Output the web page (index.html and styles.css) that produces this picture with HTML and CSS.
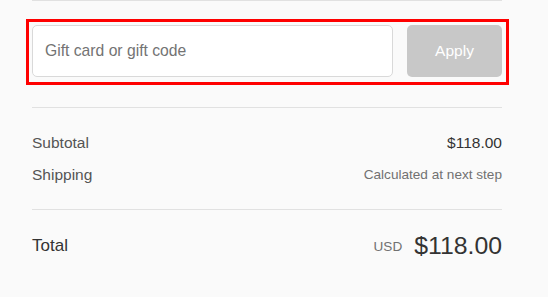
FILE: index.html
```html
<!DOCTYPE html>
<html lang="en">
<head>
  <meta charset="UTF-8" />
  <meta name="viewport" content="width=device-width, initial-scale=1.0"/>
  <title>Order summary</title>
  <link rel="stylesheet" href="styles.css">
</head>
<body>

  <div class="summary">
    <div class="section gift">
      <div class="field-row">
        <input class="field" type="text" placeholder="Gift card or gift code">
        <button class="apply" disabled>Apply</button>
      </div>
    </div>

    <div class="section lines">
      <div class="line">
        <span class="label">Subtotal</span>
        <span class="value">$118.00</span>
      </div>
      <div class="line">
        <span class="label">Shipping</span>
        <span class="value small">Calculated at next step</span>
      </div>
    </div>

    <div class="section total">
      <span class="total-label">Total</span>
      <span class="total-price">
        <span class="currency">USD</span>
        <span class="amount">$118.00</span>
      </span>
    </div>
  </div>

</body>
</html>
```

FILE: styles.css
```css
body {
  margin: 0;
  font-family: "Liberation Sans", Arial, sans-serif;
  background-color: #fafafa;
  color: #545454;
}

.summary {
  width: 470px;
  margin-left: 32px;
}

.section {
  border-top: 1px solid #e1e1e1;
}

.gift {
  padding: 24px 0 30px;
}

.field-row {
  display: flex;
  gap: 14px;
  height: 52px;
  position: relative;
}

/* highlight box around the gift code row */
.field-row::after {
  content: "";
  position: absolute;
  left: -6px;
  top: -6px;
  right: -7px;
  bottom: -8px;
  border: 3px solid #ff0000;
  pointer-events: none;
}

.field {
  flex: 1;
  box-sizing: border-box;
  height: 52px;
  margin: 0;
  padding: 0 12px;
  border: 1px solid #d9d9d9;
  border-radius: 5px;
  background: #fff;
  font-family: inherit;
  font-size: 15.7px;
  color: #333;
}

.field::placeholder {
  color: #737373;
}

.apply {
  width: 95px;
  height: 52px;
  border: none;
  border-radius: 5px;
  background: #c8c8c8;
  color: #fff;
  font-family: inherit;
  font-size: 15.5px;
}

.lines {
  padding: 25px 0 24px;
  display: flex;
  flex-direction: column;
  gap: 12px;
}

.line {
  display: flex;
  justify-content: space-between;
  align-items: center;
  line-height: 20px;
  font-size: 15.5px;
}

.value {
  color: #333;
}

.value.small {
  color: #717171;
  font-size: 13.6px;
}

.total {
  display: flex;
  justify-content: space-between;
  align-items: center;
  padding-top: 19px;
  height: 34px;
}

.total-label {
  font-size: 17px;
  color: #333;
}

.total-price {
  display: flex;
  align-items: center;
  gap: 12px;
}

.currency {
  font-size: 13.6px;
  color: #717171;
}

.amount {
  font-size: 24.8px;
  color: #333;
}
```
